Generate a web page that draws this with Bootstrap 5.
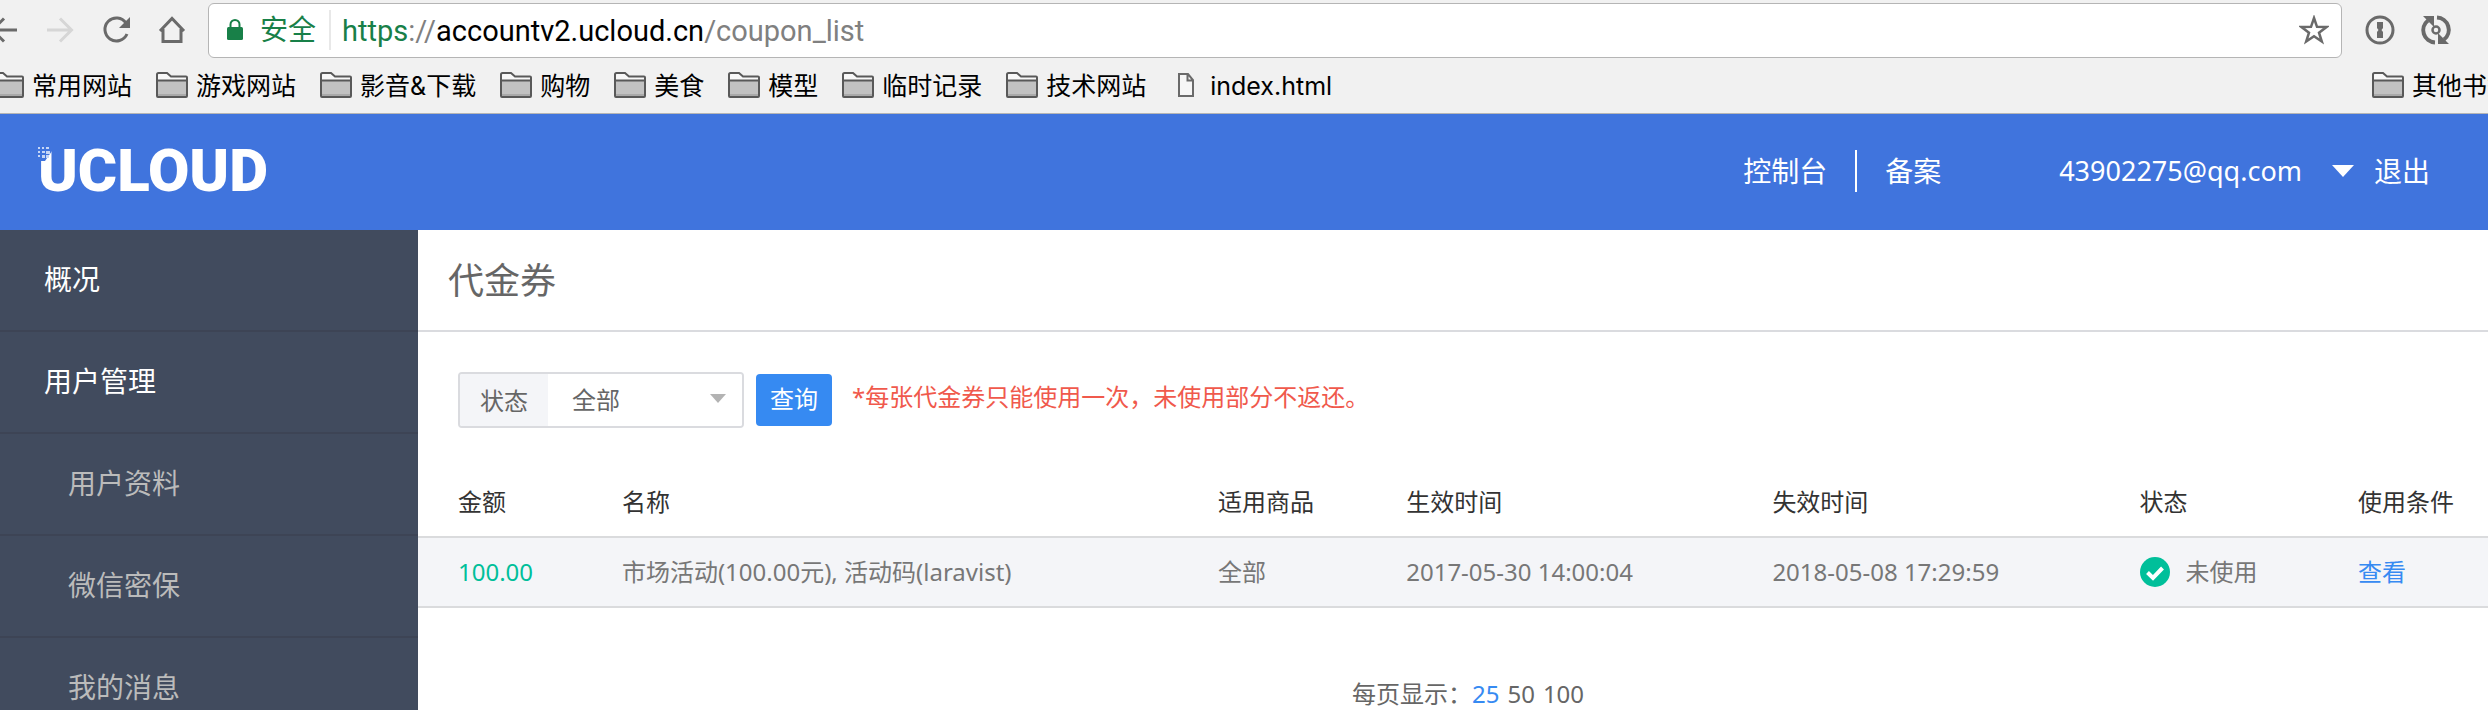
<!DOCTYPE html>
<html lang="zh-CN">
<head>
<meta charset="utf-8">
<meta name="viewport" content="width=device-width, initial-scale=1">
<title>代金券</title>
<link href="https://cdn.jsdelivr.net/npm/bootstrap@5.3.0/dist/css/bootstrap.min.css" rel="stylesheet">
<style>
  body { font-family: "Noto Sans", "Noto Sans CJK SC", sans-serif; font-size: 24px; line-height: 36px; color: #666; background: #fff; overflow: hidden; }
  a { text-decoration: none; }
  svg { display: block; flex: none; }
  .chrome { background: #f1f1f1; border-bottom: 1px solid #b5b5b5; font-family: Roboto, "Noto Sans CJK SC", sans-serif; color: #000; overflow: hidden; }
  .toolbar { height: 60px; padding: 0 36px 0 0; }
  .tool { border: 0; background: none; padding: 0; color: #6a6a6a; flex: none; }
  .tools-left { gap: 24px; margin-left: -12px; margin-right: 20px; }
  .tools-right { gap: 24px; }
  .omnibox { height: 55px; border: 1px solid #b5b5b5; border-radius: 6px; background: #fff; font-size: 28px; padding: 0 12px 0 17px; margin-right: 22px; }
  .secure { color: #188048; gap: 16px; padding-right: 13px; border-right: 2px solid #e8e8e8; height: 40px; margin-right: 11px; }
  .secure span, .url { padding-top: 2px; }
  .url { font-size: 29px; }
  .url-grey { color: #808080; }
  .url-green { color: #188048; }
  .bookmarks { height: 53px; font-family: Inter, "Noto Sans CJK SC", sans-serif; font-size: 25px; gap: 24px; padding: 0 0 4px; margin-left: -8px; }
  .bookmarks a { color: #000; gap: 8px; white-space: nowrap; }
  .bookmarks span { padding-top: 2px; }
  .others { width: 116px; overflow: hidden; }

  .topbar { background: #4074dd; height: 116px; padding: 0 58px 2px 38px; font-size: 28px; }
  .topbar a, .topbar button { color: #fff; white-space: nowrap; }
  .brand { position: relative; font-family: Roboto, sans-serif; font-weight: 900; font-size: 60px; line-height: 60px; }
  .brand svg { position: absolute; left: 0; top: 6px; }
  .links a + a { border-left: 2px solid #fff; margin-left: 28px; padding-left: 28px; }
  .links { line-height: 42px; margin-right: 118px; }
  .account { border: 0; background: none; padding: 0; margin-right: 20px; gap: 30px; font-size: 27px; }

  .sidebar { width: 418px; flex: none; background: #414b5e; font-size: 28px; }
  .sidebar a { display: block; height: 102px; line-height: 98px; padding-left: 44px; color: #fff; border-bottom: 2px solid #3d4455; }
  .sidebar .sub { padding-left: 68px; color: #bbb; }
  .page-title { font-size: 36px; line-height: 102px; height: 102px; padding-left: 30px; border-bottom: 2px solid #dadbdf; margin: 0; font-weight: 400; color: #666; }
  .filters { padding: 40px 40px 0; }
  .picker { width: 286px; height: 56px; border: 2px solid #dadbdf; border-radius: 4px; overflow: hidden; flex: none; }
  .picker label { width: 88px; background: #f4f5f8; text-align: center; line-height: 54px; flex: none; }
  .picker .field { position: relative; }
  .picker select { appearance: none; border: 0; background: #fff; color: #666; height: 52px; width: 100%; padding: 0 40px 0 24px; font: inherit; }
  .picker svg { position: absolute; right: 16px; top: 20px; pointer-events: none; }
  .query { background: #368af2; color: #fff; border: 0; border-radius: 4px; width: 76px; height: 52px; font-size: 24px; padding: 0 0 2px; margin: 0 20px 0 12px; flex: none; }
  .tip { color: #f0594c; margin-bottom: 6px; }
  .coupons { width: 100%; table-layout: fixed; margin-top: 40px; border-collapse: separate; border-spacing: 0; }
  .coupons th { font-weight: 400; color: #333; height: 70px; border-bottom: 2px solid #dadbdd; }
  .coupons td { height: 70px; background: #f4f5f8; border-bottom: 2px solid #dadbdd; color: #777; }
  .coupons th, .coupons td { padding: 0; white-space: nowrap; }
  .coupons th:first-child, .coupons td:first-child { padding-left: 40px; }
  .coupons .money { color: #00bf9a; }
  .coupons a, .pages .on { color: #368af2; }
  .pages { margin-top: 68px; padding-left: 30px; }
  .pages a { color: #666; }
  .pages a + a { margin-left: 8px; }
</style>
</head>
<body>
<svg width="0" height="0" class="position-absolute" aria-hidden="true">
  <symbol id="folder" viewBox="0 0 32 26">
    <path d="M1 24V2.500Q1 1 2.500 1H11L15 4.500H30Q31 4.500 31 5.500V24Q31 25 30 25H2Q1 25 1 24Z" fill="#f8f8f8"/>
    <path d="M1 9H31V25H1Z" fill="#c2c2c2"/><path d="M1 22H31V25H1Z" fill="#aaa"/>
    <path d="M1 24V2.500Q1 1 2.500 1H11L15 4.500H30Q31 4.500 31 5.500V24Q31 25 30 25H2Q1 25 1 24ZM1 8.500H31" fill="none" stroke="#595959" stroke-width="2"/>
  </symbol>
</svg>

<div class="chrome">
  <div class="toolbar d-flex align-items-center">
    <div class="tools-left d-flex align-items-center">
      <button class="tool" aria-label="后退"><svg width="32" height="32" viewBox="0 0 32 32" fill="none" stroke="#6a6a6a" stroke-width="3"><path d="M29 16H5M16 4.500L4.500 16L16 27.500"/></svg></button>
      <button class="tool" aria-label="前进"><svg width="32" height="32" viewBox="0 0 32 32" fill="none" stroke="#d6d6d6" stroke-width="3"><path d="M3 16H27M16 4.500L27.500 16L16 27.500"/></svg></button>
      <button class="tool" aria-label="刷新"><svg width="32" height="32" viewBox="0 0 32 32"><path d="M26 9A11.500 11.500 0 1 0 27 20" fill="none" stroke="#6a6a6a" stroke-width="3"/><path d="M30 3V14H19Z" fill="#6a6a6a"/></svg></button>
      <button class="tool" aria-label="主页"><svg width="32" height="32" viewBox="0 0 32 32" fill="none" stroke="#6a6a6a" stroke-width="3"><path d="M4 17L16 4.500L28 17M7 15V27.500H25V15"/></svg></button>
    </div>
    <div class="omnibox d-flex align-items-center flex-grow-1">
      <div class="secure d-flex align-items-center">
        <svg width="18" height="24" viewBox="0 0 18 24"><rect x="1" y="9" width="16" height="13" rx="1.500" fill="#188048"/><path d="M4.500 10V6.500A4.500 4.500 0 0 1 13.500 6.500V10" fill="none" stroke="#188048" stroke-width="2"/></svg>
        <span>安全</span>
      </div>
      <div class="url flex-grow-1"><span class="url-green">https</span><span class="url-grey">://</span>accountv2.ucloud.cn<span class="url-grey">/coupon_list</span></div>
      <button class="tool" aria-label="收藏"><svg width="30" height="30" viewBox="0 0 30 30"><path d="M15 3L18 11.800L27.500 12L20 17.700L22.800 26.500L15 21.200L7.200 26.500L10 17.700L2.500 12L12 11.800Z" fill="none" stroke="#6a6a6a" stroke-width="2.500"/></svg></button>
    </div>
    <div class="tools-right d-flex align-items-center">
      <button class="tool" aria-label="密码管理"><svg width="32" height="32" viewBox="0 0 32 32"><circle cx="16" cy="16" r="13" fill="none" stroke="#6a6a6a" stroke-width="3"/><path d="M13 8H19V14L17.500 16L19 18V24H13V18L14.500 16L13 14Z" fill="#6a6a6a"/></svg></button>
      <button class="tool" aria-label="同步"><svg width="32" height="32" viewBox="0 0 32 32"><g fill="none" stroke="#6a6a6a" stroke-width="4"><path d="M15 28.500A12.300 12.300 0 0 1 8 6.500"/><path d="M17 3.500A12.300 12.300 0 0 1 24 25.500"/></g><path d="M3 2H14V13ZM29 30H18V19Z" fill="#6a6a6a"/><circle cx="16" cy="16" r="3.500" fill="none" stroke="#6a6a6a" stroke-width="2.500"/></svg></button>
    </div>
  </div>
  <div class="bookmarks d-flex align-items-center">
    <a href="#" class="d-flex align-items-center"><svg width="32" height="26"><use href="#folder"/></svg><span>常用网站</span></a>
    <a href="#" class="d-flex align-items-center"><svg width="32" height="26"><use href="#folder"/></svg><span>游戏网站</span></a>
    <a href="#" class="d-flex align-items-center"><svg width="32" height="26"><use href="#folder"/></svg><span>影音&amp;下载</span></a>
    <a href="#" class="d-flex align-items-center"><svg width="32" height="26"><use href="#folder"/></svg><span>购物</span></a>
    <a href="#" class="d-flex align-items-center"><svg width="32" height="26"><use href="#folder"/></svg><span>美食</span></a>
    <a href="#" class="d-flex align-items-center"><svg width="32" height="26"><use href="#folder"/></svg><span>模型</span></a>
    <a href="#" class="d-flex align-items-center"><svg width="32" height="26"><use href="#folder"/></svg><span>临时记录</span></a>
    <a href="#" class="d-flex align-items-center"><svg width="32" height="26"><use href="#folder"/></svg><span>技术网站</span></a>
    <a href="#" class="d-flex align-items-center"><svg width="32" height="26" viewBox="0 0 32 26"><path d="M9 2H18L23 8V24H9ZM17.500 2V8.500H23" fill="#f6f6f6" stroke="#6a6a6a" stroke-width="2"/></svg><span>index.html</span></a>
    <a href="#" class="others d-flex align-items-center ms-auto"><svg width="32" height="26"><use href="#folder"/></svg><span>其他书签</span></a>
  </div>
</div>

<header class="topbar d-flex align-items-center">
  <a href="#" class="brand" aria-label="UCLOUD">UCLOUD<svg width="14" height="14" viewBox="0 0 14 14"><path d="M0 0H14V4L7 14H0Z" fill="#4074dd"/><g fill="#c6d6f6"><path d="M0 0h2v2H0zM4 0h2v2H4zM8 0h3v2H8zM0 4h2v2H0zM4 4h3v2H4zM8 4h4v3H8zM0 8h2v2H0zM4 8h3v3H4zM8 8h3v3H8z"/></g></svg></a>
  <nav class="links d-flex ms-auto"><a href="#">控制台</a><a href="#">备案</a></nav>
  <button class="account d-flex align-items-center">43902275@qq.com<svg width="22" height="12" viewBox="0 0 22 12"><path d="M0 0H22L11 12Z" fill="#fff"/></svg></button>
  <a href="#">退出</a>
</header>

<div class="d-flex">
  <nav class="sidebar">
    <a href="#">概况</a>
    <a href="#">用户管理</a>
    <a href="#" class="sub">用户资料</a>
    <a href="#" class="sub">微信密保</a>
    <a href="#" class="sub">我的消息</a>
  </nav>
  <main class="flex-grow-1">
    <h1 class="page-title">代金券</h1>
    <form class="filters d-flex align-items-center">
      <div class="picker d-flex">
        <label for="status">状态</label>
        <div class="field flex-grow-1">
          <select id="status"><option>全部</option></select>
          <svg width="16" height="9" viewBox="0 0 16 9"><path d="M0 0H16L8 9Z" fill="#b3b3b3"/></svg>
        </div>
      </div>
      <button type="button" class="query btn">查询</button>
      <span class="tip">*每张代金券只能使用一次，未使用部分不返还。</span>
    </form>
    <table class="coupons">
      <colgroup><col style="width:9.850%"><col style="width:28.800%"><col style="width:9.090%"><col style="width:17.690%"><col style="width:17.740%"><col style="width:10.550%"><col></colgroup>
      <thead><tr><th>金额</th><th>名称</th><th>适用商品</th><th>生效时间</th><th>失效时间</th><th>状态</th><th>使用条件</th></tr></thead>
      <tbody><tr>
        <td class="money">100.00</td><td>市场活动(100.00元), 活动码(laravist)</td><td>全部</td><td>2017-05-30 14:00:04</td><td>2018-05-08 17:29:59</td>
        <td><span class="d-flex align-items-center gap-3"><svg width="30" height="30" viewBox="0 0 30 30"><circle cx="15" cy="15" r="15" fill="#00bf9a"/><path d="M7.500 15.500L13 21L22.500 11" fill="none" stroke="#fff" stroke-width="4"/></svg>未使用</span></td>
        <td><a href="#">查看</a></td>
      </tr></tbody>
    </table>
    <div class="pages d-flex justify-content-center"><span>每页显示：</span><a href="#" class="on">25</a><a href="#">50</a><a href="#">100</a></div>
  </main>
</div>
<script src="https://cdn.jsdelivr.net/npm/bootstrap@5.3.0/dist/js/bootstrap.bundle.min.js"></script>
</body>
</html>
